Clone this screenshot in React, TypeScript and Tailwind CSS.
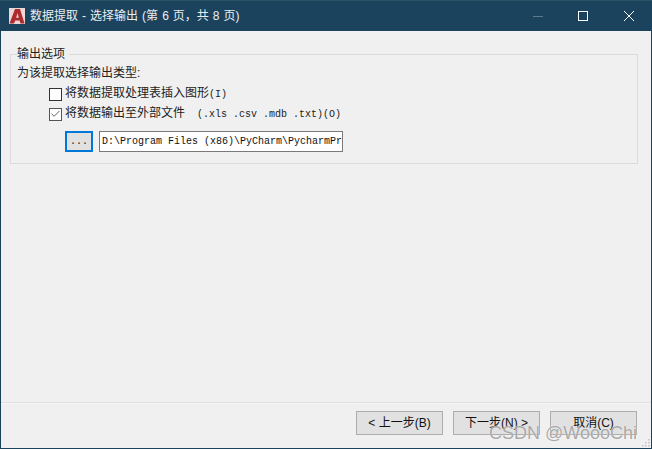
import React from 'react';
import { Check } from 'lucide-react';

const uiFont = "font-['Liberation_Sans','Noto_Sans_CJK_SC',sans-serif]";
const monoFont = "font-['Liberation_Mono','Noto_Sans_CJK_SC',monospace]";

function AppLogo() {
  return (
    <svg width="16" height="16" viewBox="0 0 16 16">
      <rect width="16" height="16" fill="#ecd8d5" />
      <path d="M0.5 15.5 L6 1 H11 L15.5 15.5 H11.5 L10.6 12.5 H6.2 L5 15.5 Z M7.1 9.7 H9.8 L8.6 5.2 Z" fill="#ad2a2e" fillRule="evenodd" />
    </svg>
  );
}

function WindowControls() {
  return (
    <div className="ml-auto flex items-center">
      <svg width="10" height="10" viewBox="0 0 10 10" className="mr-[35px]">
        <path d="M0 5.5 H10" stroke="#5d7a8d" />
      </svg>
      <svg width="10" height="10" viewBox="0 0 10 10" className="mr-[36px]">
        <rect x="0.5" y="0.5" width="9" height="9" fill="none" stroke="#fff" />
      </svg>
      <svg width="10" height="10" viewBox="0 0 10 10" className="mr-[18px]">
        <path d="M0 0 L10 10 M10 0 L0 10" stroke="#fff" />
      </svg>
    </div>
  );
}

function FooterButton({ children }: { children: React.ReactNode }) {
  return (
    <button className="w-[87px] h-6 bg-[#e1e1e1] border border-[#adadad] text-[12px] leading-none text-[#111]">
      {children}
    </button>
  );
}

function Option({ checked, cjk, latin }: { checked?: boolean; cjk: string; latin: string }) {
  return (
    <div className="flex items-center h-5 gap-[3px]">
      <span className={`w-[13px] h-[13px] bg-white border flex items-center justify-center ${checked ? 'border-[#555]' : 'border-[#333]'}`}>
        {checked && <Check size={12} strokeWidth={2} className="text-[#555]" />}
      </span>
      <span className={`${monoFont} text-[12px] text-[#222] whitespace-pre`}>
        {cjk}
        <span className="text-[10px]">{latin}</span>
      </span>
    </div>
  );
}

export default function App() {
  return (
    <div className={`${uiFont} relative w-[652px] h-[449px] flex flex-col bg-[#1c435e] overflow-hidden`}>
      <div className="h-[31px] flex items-center pl-[9px] border-t border-[#2d5268] shrink-0">
        <AppLogo />
        <span className="ml-[5px] text-[12px] text-[#e8eef2] [word-spacing:0.7px]">数据提取 - 选择输出 (第 6 页，共 8 页)</span>
        <WindowControls />
      </div>

      <div className="flex-1 mx-px mb-px bg-[#f0f0f0] flex flex-col relative">
        <fieldset className="mt-[16px] ml-[9px] mr-[13px] h-[117px] border border-[#dcdcdc] pl-[6px] pr-2 min-w-0">
          <legend className="text-[12px] leading-[15px] text-[#222] bg-[#f0f0f0] pr-1">输出选项</legend>
          <div className="text-[12px] leading-[16px] text-[#222] mt-[3px]">为该提取选择输出类型:</div>
          <div className="ml-[32px] mt-[3px] flex flex-col">
            <Option cjk="将数据提取处理表插入图形" latin="(I)" />
            <Option checked cjk="将数据输出至外部文件" latin="  (.xls .csv .mdb .txt)(O)" />
          </div>
          <div className="ml-[48px] mt-[7px] flex items-center gap-[6px]">
            <button className={`${monoFont} w-[28px] h-[21px] bg-[#e1e1e1] border-2 border-[#0078d7] text-[10px] leading-none text-[#222]`}>
              ...
            </button>
            <div className={`${monoFont} w-[244px] h-[21px] bg-white border border-[#7a7a7a] pl-[2px] text-[10px] leading-[19px] text-[#111] whitespace-nowrap overflow-hidden`}>
              D:\Program Files (x86)\PyCharm\PycharmPr
            </div>
          </div>
        </fieldset>

        <div className="mt-auto mb-[7px] h-[2px] bg-[#dedede] border-b border-[#f7f7f7]" />
        <div className="h-[37px] flex justify-end gap-[10px] pr-[14px]">
          <FooterButton>&lt; 上一步(B)</FooterButton>
          <FooterButton>下一步(N) &gt;</FooterButton>
          <FooterButton>取消(C)</FooterButton>
        </div>

        {/* resize grip */}
        <svg width="8" height="8" viewBox="0 0 8 8" className="absolute right-[1px] bottom-[1px]">
          <path d="M6 0h1.5v1.5H6z M3 3h1.5v1.5H3z M6 3h1.5v1.5H6z M0 6h1.5v1.5H0z M3 6h1.5v1.5H3z M6 6h1.5v1.5H6z" fill="#c4c4c4" />
        </svg>

        {/* watermark over the footer */}
        <div className="absolute right-[14px] bottom-[5px] text-[18px] leading-5 text-[#8c8c8c]/75 [text-shadow:0_0_1px_#ffffff] pointer-events-none">
          CSDN @WoooChi
        </div>
      </div>
    </div>
  );
}
